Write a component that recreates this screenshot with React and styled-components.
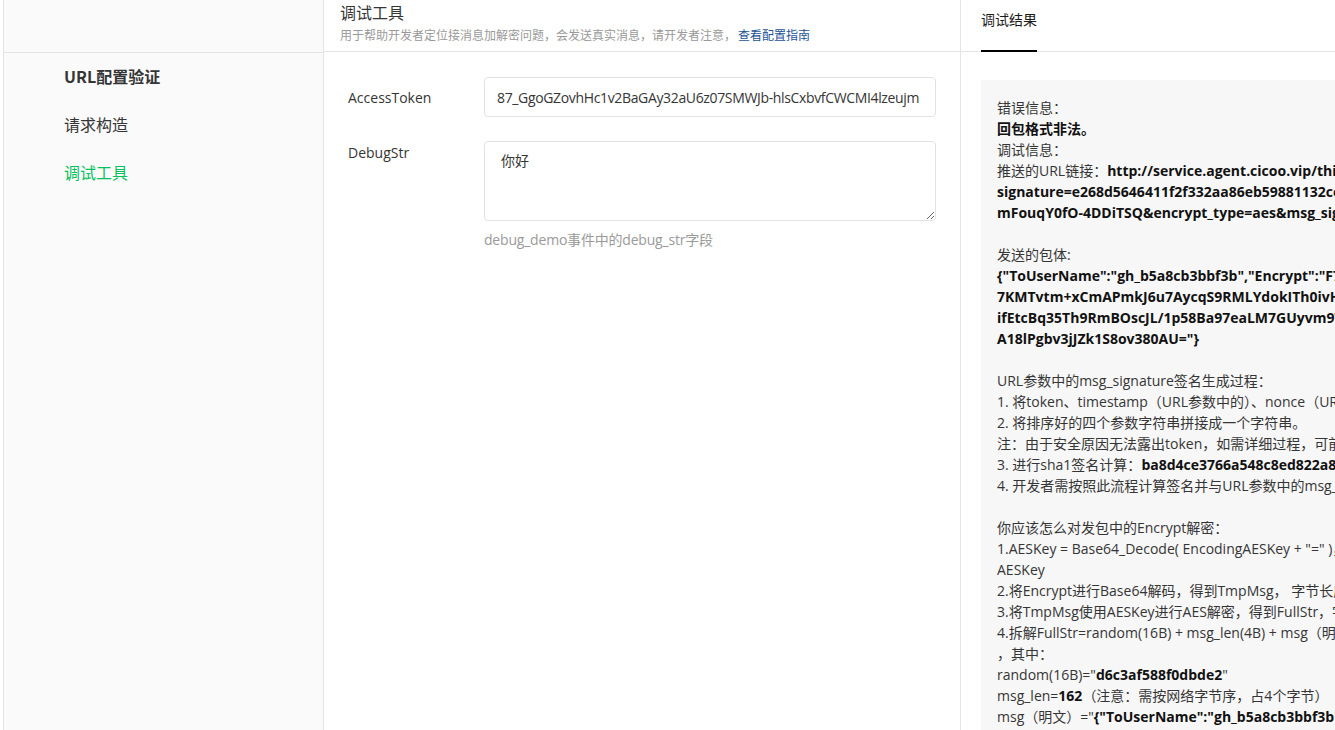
import React from "react";
import styled, { createGlobalStyle } from "styled-components";

const GlobalStyle = createGlobalStyle`
  html, body {
    margin: 0;
    padding: 0;
    background: #fff;
    overflow: hidden;
  }
  body {
    font-family: "Open Sans", "Noto Sans CJK SC", sans-serif;
    color: #353535;
  }
`;

const Page = styled.div`
  display: flex;
  width: 1335px;
  height: 730px;
  padding-left: 3px;
  box-sizing: border-box;
  overflow: hidden;
`;

const Sidebar = styled.aside`
  flex: 0 0 321px;
  box-sizing: border-box;
  background: #fafafa;
  border-left: 1px solid #e4e4e4;
  border-right: 1px solid #e4e4e4;
`;

const SideTop = styled.div`
  height: 52px;
  border-bottom: 1px solid #e4e4e4;
`;

const NavItem = styled.div`
  height: 48px;
  line-height: 46px;
  padding-left: 60px;
  font-size: 16px;
  font-weight: ${(p) => (p.$strong ? 600 : 400)};
  color: ${(p) => (p.$active ? "#07c160" : "#353535")};
  font-family: "Noto Sans CJK SC", sans-serif;
`;

const Main = styled.main`
  flex: 0 0 637px;
  box-sizing: border-box;
  border-right: 1px solid #e4e4e4;
`;

const MainHead = styled.header`
  height: 52px;
  box-sizing: border-box;
  border-bottom: 1px solid #e4e4e4;
  padding: 0 16px;
`;

const Title = styled.h1`
  margin: 0;
  font-size: 16px;
  font-weight: 400;
  line-height: 24px;
  color: #353535;
  font-family: "Noto Sans CJK SC", sans-serif;
`;

const SubTitle = styled.p`
  margin: 0;
  font-size: 12px;
  line-height: 22px;
  color: #999;
  font-family: "Noto Sans CJK SC", sans-serif;
`;

const GuideLink = styled.a`
  color: #1e5494;
  text-decoration: none;
  margin-left: 2px;
`;

const Form = styled.div`
  padding: 25px 24px;
  display: flex;
  flex-direction: column;
  gap: 24px;
`;

const Row = styled.div`
  display: flex;
  align-items: flex-start;
`;

const Label = styled.label`
  flex: 0 0 136px;
  font-size: 14px;
  line-height: 22px;
  margin-top: ${(p) => p.$offset || 0}px;
  color: #353535;
`;

const Field = styled.div`
  flex: 1;
  display: flex;
  flex-direction: column;
`;

const TextInput = styled.input`
  box-sizing: border-box;
  width: 100%;
  height: 40px;
  border: 1px solid #e2e2e2;
  border-radius: 4px;
  padding: 0 12px;
  font-family: "Open Sans", "Noto Sans CJK SC", sans-serif;
  font-size: 14px;
  letter-spacing: -0.35px;
  color: #353535;
  outline: none;
`;

const TextArea = styled.textarea`
  box-sizing: border-box;
  width: 100%;
  height: 80px;
  border: 1px solid #e2e2e2;
  border-radius: 4px;
  padding: 7px 16px;
  font-family: "Noto Sans CJK SC", sans-serif;
  font-size: 14px;
  line-height: 22px;
  color: #353535;
  outline: none;
  resize: vertical;
`;

const Hint = styled.div`
  margin-top: 8px;
  font-size: 14px;
  line-height: 22px;
  color: #9a9a9a;
  letter-spacing: -0.2px;
`;

const Result = styled.section`
  flex: 0 0 auto;
  width: 600px;
  box-sizing: border-box;
`;

const TabBar = styled.div`
  height: 52px;
  box-sizing: border-box;
  border-bottom: 1px solid #e4e4e4;
  padding-left: 20px;
  display: flex;
`;

const Tab = styled.div`
  font-size: 14px;
  padding-top: 8px;
  line-height: 22px;
  color: #1a1a1a;
  border-bottom: 2px solid #000;
  margin-bottom: -1px;
  font-family: "Noto Sans CJK SC", sans-serif;
`;

const ResultBox = styled.div`
  margin: 28px 0 0 20px;
  background: #f7f7f7;
  padding: 17px 16px 40px;
  font-size: 14px;
  line-height: 21px;
  color: #353535;
`;

const Line = styled.div`
  white-space: nowrap;
  min-height: 21px;
  b {
    font-weight: 700;
    color: #111;
  }
`;

const lines = [
  <>错误信息：</>,
  <b>回包格式非法。</b>,
  <>调试信息：</>,
  <>推送的URL链接：<b>http://service.agent.cicoo.vip/third/callback/wechat/receive?msg_</b></>,
  <b>signature=e268d5646411f2f332aa86eb59881132ce9d3b40&timestamp=1712&nonce=</b>,
  <b>mFouqY0fO-4DDiTSQ&encrypt_type=aes&msg_signature=ba8d4ce3766a548c</b>,
  null,
  <>发送的包体:</>,
  <b>{'{"ToUserName":"gh_b5a8cb3bbf3b","Encrypt":"F7yQ3pX9nNa1wtZ'}</b>,
  <b>7KMTvtm+xCmAPmkJ6u7AycqS9RMLYdokITh0ivHGq2ZbN4cT8</b>,
  <b>ifEtcBq35Th9RmBOscJL/1p58Ba97eaLM7GUyvm9WzX8jPq2</b>,
  <b>{'A18lPgbv3jJZk1S8ov380AU="}'}</b>,
  null,
  <>URL参数中的msg_signature签名生成过程：</>,
  <>1. 将token、timestamp（URL参数中的）、nonce（URL参数中的）、Encrypt进行字典序排序</>,
  <>2. 将排序好的四个参数字符串拼接成一个字符串。</>,
  <>注：由于安全原因无法露出token，如需详细过程，可前往开发者文档查看</>,
  <>3. 进行sha1签名计算：<b>ba8d4ce3766a548c8ed822a8e1f0b6</b></>,
  <>4. 开发者需按照此流程计算签名并与URL参数中的msg_signature进行比较</>,
  null,
  <>你应该怎么对发包中的Encrypt解密：</>,
  <>1.AESKey = Base64_Decode( EncodingAESKey + "=" )，EncodingAESKey为开发者配置的</>,
  <>AESKey</>,
  <>2.将Encrypt进行Base64解码，得到TmpMsg， 字节长度为</>,
  <>3.将TmpMsg使用AESKey进行AES解密，得到FullStr，字节长度为</>,
  <>4.拆解FullStr=random(16B) + msg_len(4B) + msg（明文）+ receiveid</>,
  <>，其中：</>,
  <>random(16B)="<b>d6c3af588f0dbde2</b>"</>,
  <>msg_len=<b>162</b>（注意：需按网络字节序，占4个字节）</>,
  <>msg（明文）="<b>{'{"ToUserName":"gh_b5a8cb3bbf3b","FromUserName"'}</b></>,
];

export default function App() {
  return (
    <>
      <GlobalStyle />
      <Page>
        <Sidebar>
          <SideTop />
          <NavItem $strong>URL配置验证</NavItem>
          <NavItem>请求构造</NavItem>
          <NavItem $active>调试工具</NavItem>
        </Sidebar>
        <Main>
          <MainHead>
            <Title>调试工具</Title>
            <SubTitle>
              用于帮助开发者定位接消息加解密问题，会发送真实消息，请开发者注意，
              <GuideLink href="#">查看配置指南</GuideLink>
            </SubTitle>
          </MainHead>
          <Form>
            <Row>
              <Label $offset={10}>AccessToken</Label>
              <Field>
                <TextInput
                  readOnly
                  value="87_GgoGZovhHc1v2BaGAy32aU6z07SMWJb-hlsCxbvfCWCMI4lzeujm"
                />
              </Field>
            </Row>
            <Row>
              <Label $offset={1}>DebugStr</Label>
              <Field>
                <TextArea readOnly value="你好" />
                <Hint>debug_demo事件中的debug_str字段</Hint>
              </Field>
            </Row>
          </Form>
        </Main>
        <Result>
          <TabBar>
            <Tab>调试结果</Tab>
          </TabBar>
          <ResultBox>
            {lines.map((l, i) => (
              <Line key={i}>{l}</Line>
            ))}
          </ResultBox>
        </Result>
      </Page>
    </>
  );
}
